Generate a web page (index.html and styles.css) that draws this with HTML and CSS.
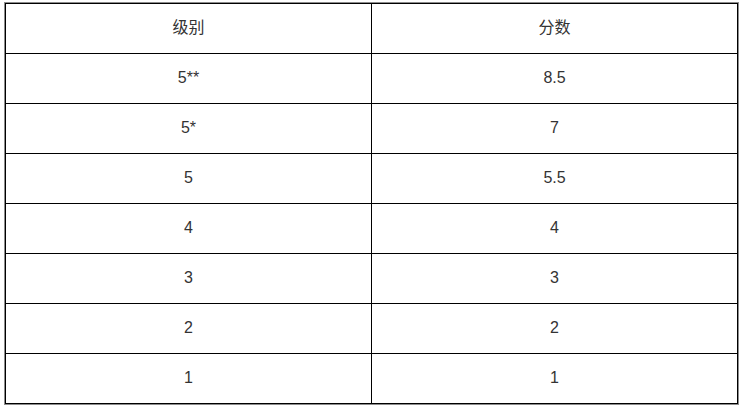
FILE: index.html
```html
<!DOCTYPE html>
<html lang="zh">
<head>
<meta charset="utf-8">
<link rel="stylesheet" href="styles.css">
</head>
<body>
<div class="frame">
<table class="grade">
<thead>
<tr><th>级别</th><th>分数</th></tr>
</thead>
<tbody>
<tr><td>5**</td><td>8.5</td></tr>
<tr><td>5*</td><td>7</td></tr>
<tr><td>5</td><td>5.5</td></tr>
<tr><td>4</td><td>4</td></tr>
<tr><td>3</td><td>3</td></tr>
<tr><td>2</td><td>2</td></tr>
<tr><td>1</td><td>1</td></tr>
</tbody>
</table>
</div>
</body>
</html>
```
FILE: styles.css
```css
html, body {
  margin: 0;
  padding: 0;
  background: #fff;
}
body {
  padding: 2px 0 0 4px;
  font-family: "Liberation Sans", "Noto Sans CJK SC", sans-serif;
  font-size: 16px;
  color: #333;
}
.frame {
  width: 733px;
  border: 1px solid #8c8c8c;
}
.grade {
  width: 100%;
  border-collapse: collapse;
  table-layout: fixed;
}
.grade th,
.grade td {
  border: 1px solid #000;
  text-align: center;
  vertical-align: middle;
  font-weight: normal;
}
.grade th {
  height: 44px;
  padding: 0 0 5px;
}
.grade td {
  height: 48px;
  padding: 0 0 1px;
}
```
